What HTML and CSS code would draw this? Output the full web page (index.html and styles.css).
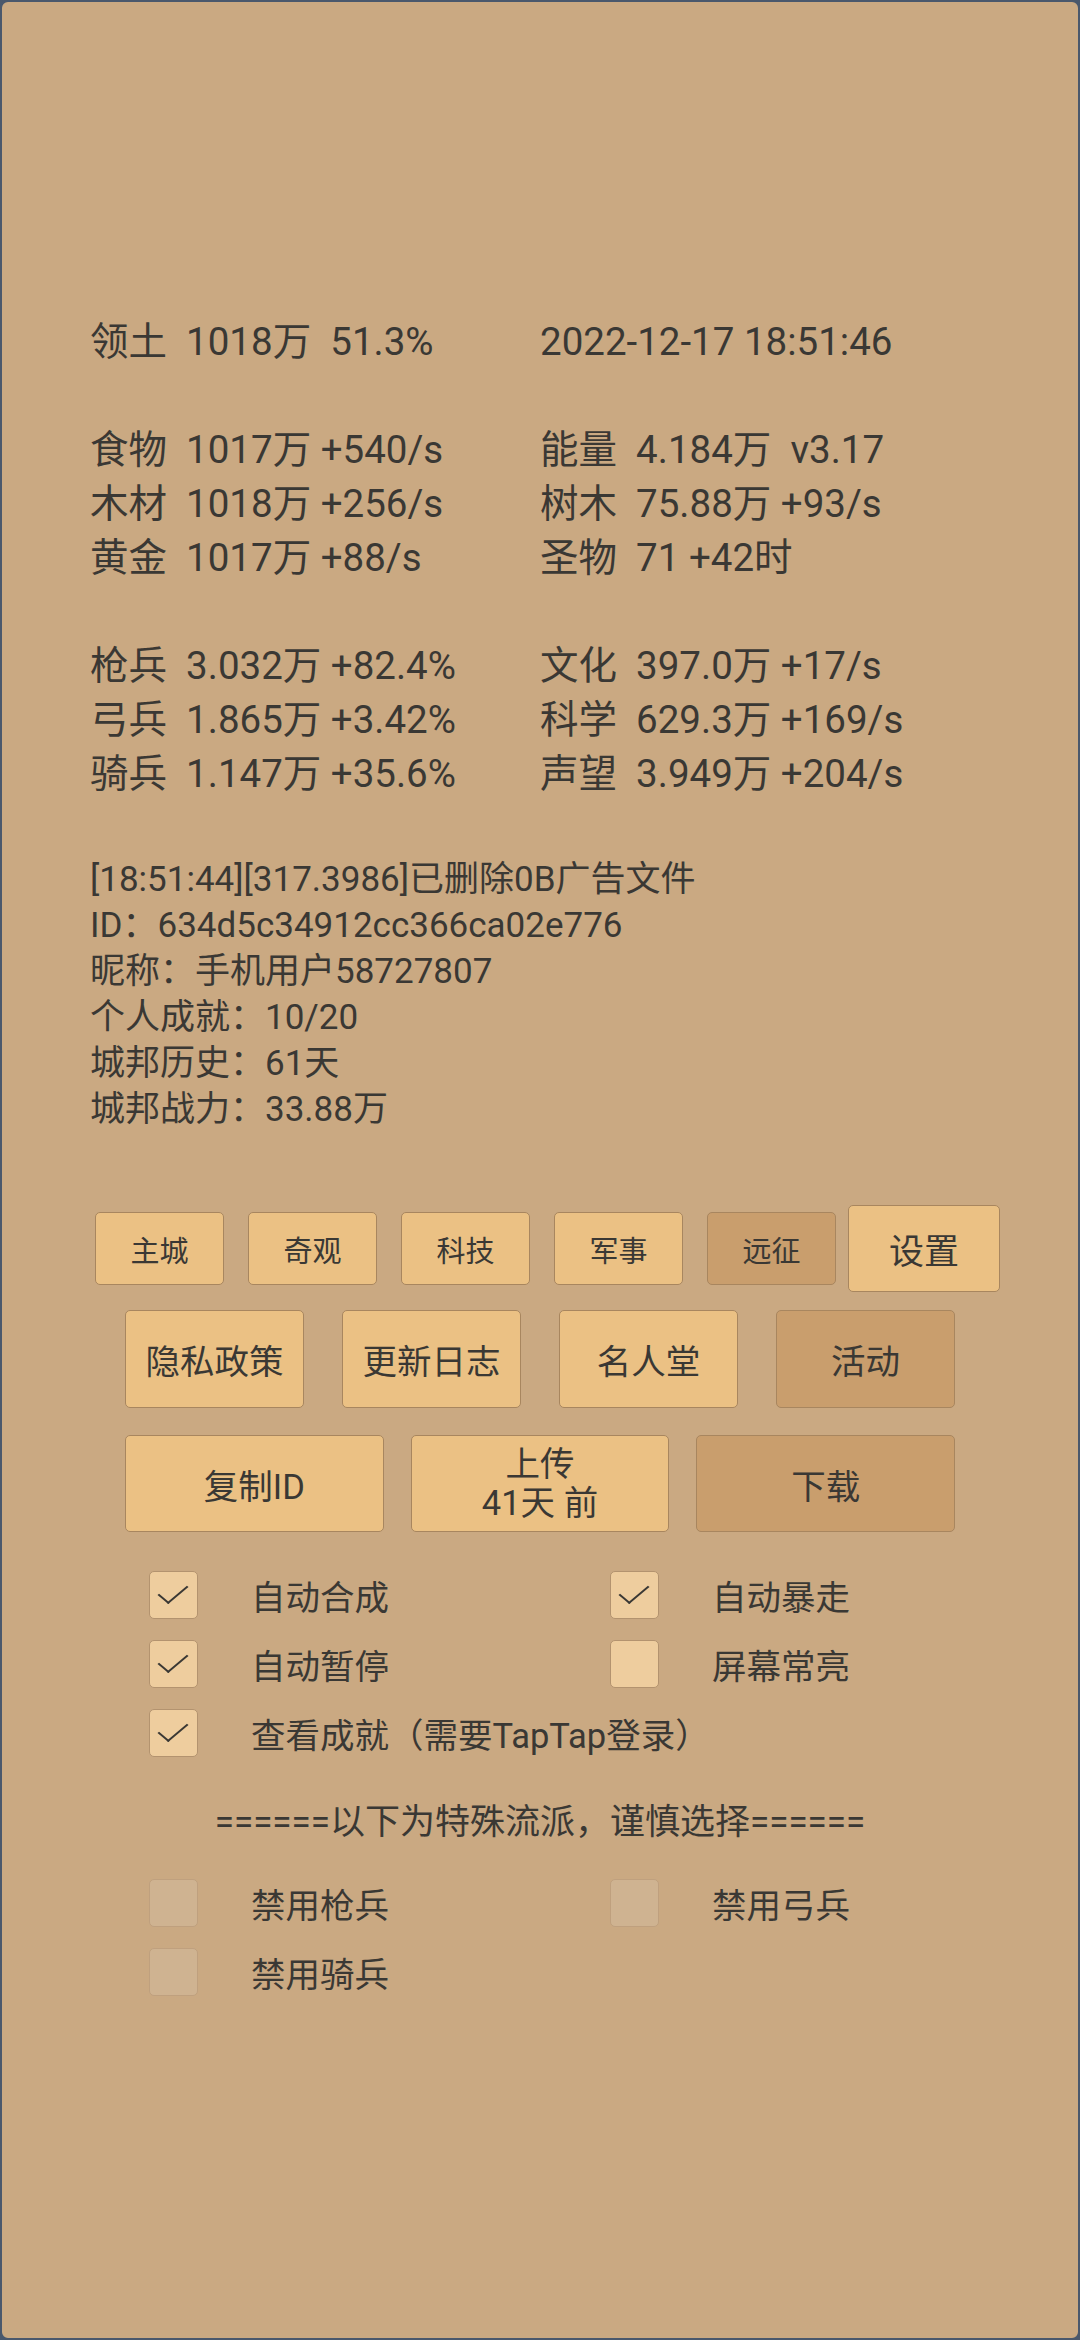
FILE: index.html
```html
<!DOCTYPE html>
<html>
<head>
  <meta charset="UTF-8">
  <meta name="viewport" content="width=device-width, initial-scale=1.0">
  <title>城邦</title>
  <link rel="stylesheet" href="styles.css">
</head>
<body>
  <div class="screen">
    <div class="stats">
      <div class="stat-col">
        <p>领土  1018万  51.3%</p>
        <p> </p>
        <p>食物  1017万 +540/s</p>
        <p>木材  1018万 +256/s</p>
        <p>黄金  1017万 +88/s</p>
        <p> </p>
        <p>枪兵  3.032万 +82.4%</p>
        <p>弓兵  1.865万 +3.42%</p>
        <p>骑兵  1.147万 +35.6%</p>
      </div>
      <div class="stat-col">
        <p>2022-12-17 18:51:46</p>
        <p> </p>
        <p>能量  4.184万  v3.17</p>
        <p>树木  75.88万 +93/s</p>
        <p>圣物  71 +42时</p>
        <p> </p>
        <p>文化  397.0万 +17/s</p>
        <p>科学  629.3万 +169/s</p>
        <p>声望  3.949万 +204/s</p>
      </div>
    </div>

    <div class="log">
      <p>[18:51:44][317.3986]已删除0B广告文件</p>
      <p>ID：634d5c34912cc366ca02e776</p>
      <p>昵称：手机用户58727807</p>
      <p>个人成就：10/20</p>
      <p>城邦历史：61天</p>
      <p>城邦战力：33.88万</p>
    </div>

    <div class="tabs">
      <button class="btn tab">主城</button>
      <button class="btn tab">奇观</button>
      <button class="btn tab">科技</button>
      <button class="btn tab">军事</button>
      <button class="btn tab active">远征</button>
      <button class="btn tab-big">设置</button>
    </div>

    <div class="row row-four">
      <button class="btn">隐私政策</button>
      <button class="btn">更新日志</button>
      <button class="btn">名人堂</button>
      <button class="btn active">活动</button>
    </div>

    <div class="row row-three">
      <button class="btn">复制ID</button>
      <button class="btn two-line">上传<br>41天 前</button>
      <button class="btn active">下载</button>
    </div>

    <div class="options">
      <label class="option"><span class="box checked"></span>自动合成</label>
      <label class="option"><span class="box checked"></span>自动暴走</label>
      <label class="option"><span class="box checked"></span>自动暂停</label>
      <label class="option"><span class="box"></span>屏幕常亮</label>
      <label class="option wide"><span class="box checked"></span>查看成就（需要TapTap登录）</label>
    </div>

    <p class="divider">======以下为特殊流派，谨慎选择======</p>

    <div class="options">
      <label class="option"><span class="box off"></span>禁用枪兵</label>
      <label class="option"><span class="box off"></span>禁用弓兵</label>
      <label class="option"><span class="box off"></span>禁用骑兵</label>
    </div>
  </div>
</body>
</html>
```

FILE: styles.css
```css
* {
  box-sizing: border-box;
  font-family: Roboto, "Noto Sans CJK SC", sans-serif;
}

body {
  margin: 0;
  background-color: #4a586c;
}

p {
  margin: 0;
}

.screen {
  width: 1080px;
  height: 2340px;
  border: 2px solid #4a586c;
  border-radius: 8px;
  background-color: #caa982;
  color: #3a3834;
  overflow: hidden;
}

.stats {
  display: grid;
  grid-template-columns: 450px auto;
  margin-left: 88px;
  padding-top: 313px;
}

.stat-col p {
  font-size: 38.5px;
  line-height: 54px;
  height: 54px;
  white-space: pre;
}

.log {
  margin: 56px 0 0 88px;
}

.log p {
  font-size: 35px;
  line-height: 46px;
  white-space: nowrap;
}

.btn {
  border: 1px solid #a8865f;
  border-radius: 5px;
  background-color: #ebc184;
  color: #3a3834;
  font-size: 34.5px;
  padding: 0;
  cursor: pointer;
}

.btn.active {
  background-color: #c99e6d;
}

.tabs {
  display: flex;
  align-items: center;
  gap: 24px;
  margin: 72px 0 0 93px;
  height: 87px;
}

.tab {
  width: 129px;
  height: 73px;
  font-size: 29px;
}

.tab-big {
  width: 152px;
  height: 87px;
  margin-left: -12px;
  font-size: 35px;
}

.row {
  display: flex;
  margin-left: 123px;
  width: 830px;
}

.row-four {
  gap: 38px;
  margin-top: 18px;
}

.row-four .btn {
  width: 179px;
  height: 98px;
}

.row-three {
  gap: 27px;
  margin-top: 27px;
}

.row-three .btn {
  width: 259px;
  height: 97px;
}

.two-line {
  line-height: 39px;
}

.options {
  display: grid;
  grid-template-columns: 461px 461px;
  margin-left: 147px;
  margin-top: 28px;
}

.option {
  display: flex;
  align-items: center;
  gap: 53px;
  height: 69px;
  font-size: 34.5px;
  white-space: nowrap;
}

.option.wide {
  grid-column: span 2;
}

.box {
  flex: none;
  width: 49px;
  height: 48px;
  border: 1px solid #b3936f;
  border-radius: 5px;
  background-color: #eecd9e;
  position: relative;
}

.box.checked::after {
  content: "";
  position: absolute;
  left: 16px;
  top: 6px;
  width: 12px;
  height: 24px;
  border-right: 2.5px solid #3a3834;
  border-bottom: 2.5px solid #3a3834;
  transform: rotate(40deg) skewX(-10deg);
}

.box.off {
  background-color: #cfb391;
  border-color: #bfa07e;
}

.divider {
  margin-top: 28px;
  height: 56px;
  line-height: 56px;
  text-align: center;
  font-size: 35px;
  white-space: nowrap;
}

.divider + .options {
  margin-top: 17px;
}
```
